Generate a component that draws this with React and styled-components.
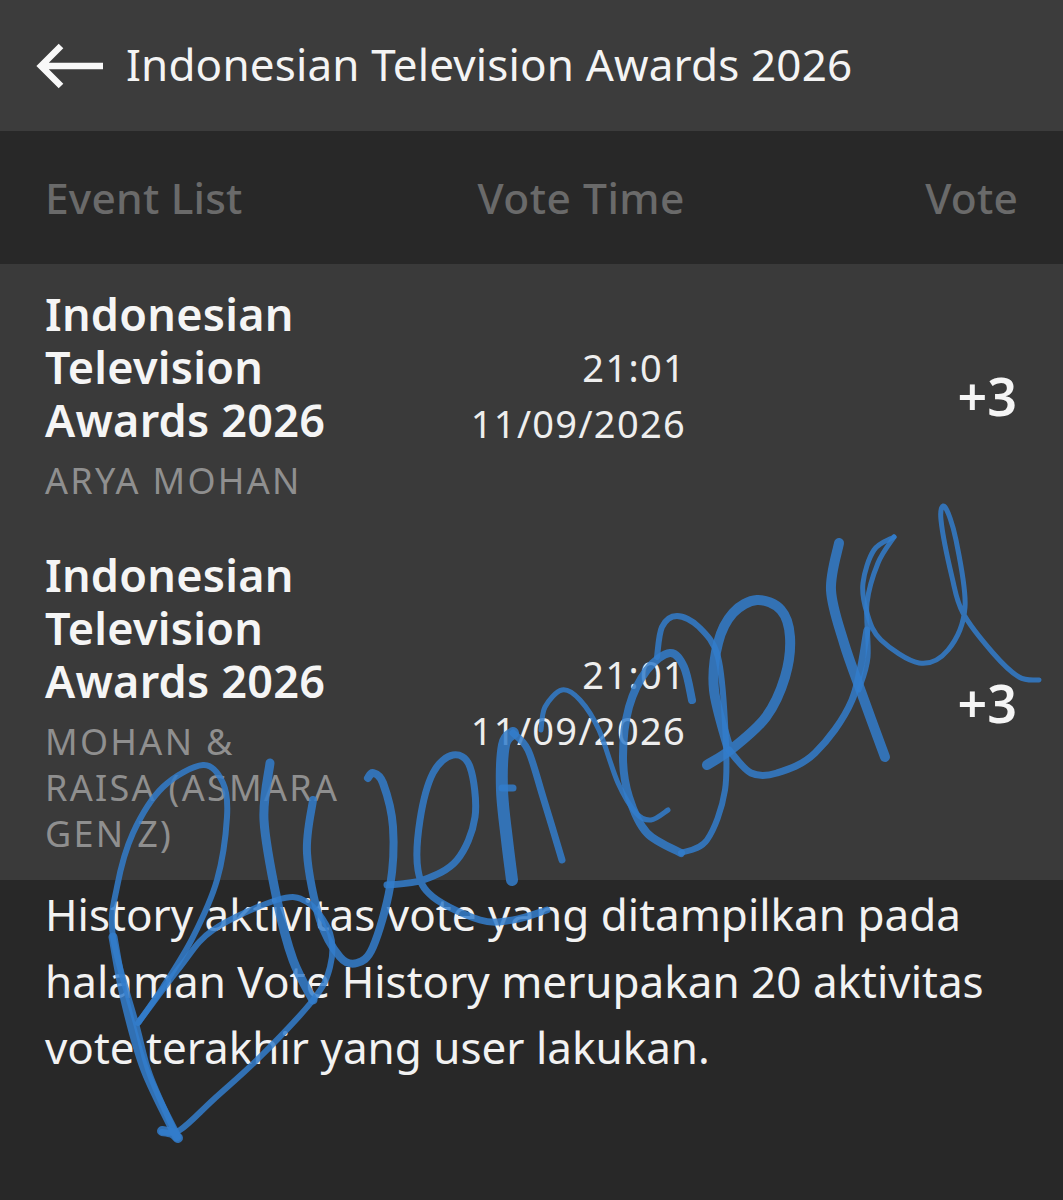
import React from 'react';
import styled, { createGlobalStyle } from 'styled-components';

const GlobalStyle = createGlobalStyle`
  html, body { margin: 0; padding: 0; background: #282828; }
  body { font-family: "Noto Sans", "Open Sans", sans-serif; }
`;

const Page = styled.div`
  position: relative;
  width: 1063px;
  height: 1200px;
  overflow: hidden;
  background: #282828;
`;

const Header = styled.header`
  display: flex;
  align-items: center;
  height: 131px;
  padding-left: 36px;
  box-sizing: border-box;
  background: #3c3c3c;
`;

const BackIcon = styled.svg`
  width: 68px;
  height: 46px;
  flex: none;
`;

const Title = styled.h1`
  margin: -3px 0 0 22px;
  font-size: 44px;
  letter-spacing: 0.15px;
  font-weight: 400;
  color: #f4f4f4;
  white-space: nowrap;
`;

const TableHead = styled.div`
  display: flex;
  align-items: center;
  justify-content: space-between;
  height: 133px;
  padding: 0 45px;
  box-sizing: border-box;
  background: #282828;
`;

const HeadCell = styled.div`
  font-size: 42.5px;
  letter-spacing: ${p => p.$spacing || '0.2px'};
  font-weight: 500;
  color: #6a6a6a;
  width: ${p => p.$width};
  text-align: ${p => p.$align || 'left'};
`;

const Rows = styled.div`
  background: #3a3a3a;
  height: 616px;
`;

const Row = styled.div`
  display: flex;
  align-items: center;
  padding: 23px 46px 21px 45px;
`;

const EventCell = styled.div`
  width: 300px;
  flex: none;
`;

const EventName = styled.div`
  font-size: 45px;
  line-height: 53px;
  font-weight: 600;
  letter-spacing: 0.25px;
  color: #f5f5f5;
`;

const Nominee = styled.div`
  margin-top: 12px;
  font-size: 36px;
  line-height: 46px;
  letter-spacing: 2.3px;
  color: #8f8f8f;
`;

const TimeCell = styled.div`
  width: 341px;
  flex: none;
  margin-top: -2px;
  font-size: 38px;
  line-height: 56px;
  letter-spacing: 1.3px;
  text-align: right;
  color: #eeeeee;
`;

const TimeLine = styled.div``;

const Points = styled.div`
  flex: 1;
  font-size: 52px;
  font-weight: 600;
  text-align: right;
  color: #f5f5f5;
`;

const Note = styled.p`
  margin: 0;
  padding: 1px 60px 0 45px;
  font-size: 44px;
  line-height: 66.5px;
  color: #f2f2f2;
`;

const Signature = styled.svg`
  position: absolute;
  left: 0;
  top: 0;
  width: 1063px;
  height: 1200px;
  pointer-events: none;
`;

// catmull-rom through the traced points
const smooth = pts => {
  let d = `M${pts[0][0]} ${pts[0][1]}`;
  for (let i = 0; i < pts.length - 1; i++) {
    const p0 = pts[i - 1] || pts[i];
    const p1 = pts[i];
    const p2 = pts[i + 1];
    const p3 = pts[i + 2] || p2;
    const c1x = p1[0] + (p2[0] - p0[0]) / 6;
    const c1y = p1[1] + (p2[1] - p0[1]) / 6;
    const c2x = p2[0] - (p3[0] - p1[0]) / 6;
    const c2y = p2[1] - (p3[1] - p1[1]) / 6;
    d += ` C${c1x.toFixed(1)} ${c1y.toFixed(1)} ${c2x.toFixed(1)} ${c2y.toFixed(1)} ${p2[0]} ${p2[1]}`;
  }
  return d;
};

const strokes = [
  // first bowl
  { w: 6, pts: [[177,1137],[150,1075],[137,1027],[113,937],[117,887],[133,833],[163,787],[203,765],[223,783],[227,817],[217,880],[193,937],[163,987],[138,1023]] },
  { w: 9, pts: [[113,937],[125,1000],[145,1070],[177,1137]] },
  // second bowl
  { w: 6, pts: [[138,1023],[180,967],[213,930],[277,900],[307,902],[330,933],[330,967],[313,1000],[260,1057],[213,1100],[180,1130],[162,1132]] },
  { w: 10, pts: [[162,1131],[172,1133],[178,1138]] },
  // l
  { w: 9, pts: [[270,763],[264,820],[277,900],[293,960],[313,1000]] },
  // u
  { w: 8, pts: [[313,800],[307,853],[320,920],[340,957],[357,963],[373,947],[390,887],[393,827],[383,783],[373,773],[368,778]] },
  // e
  { w: 7, pts: [[387,885],[423,880],[457,860],[475,817],[470,767],[453,755],[433,773],[420,820],[418,870],[433,897],[480,920],[513,920],[547,910]] },
  // n
  { w: 12, pts: [[512,880],[507,840],[502,790],[504,745],[513,733]] },
  { w: 7, pts: [[513,733],[528,750],[543,797],[562,860]] },
  { w: 7, pts: [[502,788],[513,788]] },
  { w: 5, pts: [[541,730],[545,707],[562,690],[580,700],[599,730],[618,783],[636,813],[651,820],[668,810]] },
  // c with the loop back over it
  { w: 8, pts: [[692,700],[684,667],[670,653],[647,670],[629,707],[623,757],[629,797],[647,833],[681,853]] },
  { w: 6, pts: [[681,853],[707,840],[725,790],[725,723],[718,657],[699,627],[677,616],[662,627],[657,657]] },
  // e
  { w: 10, pts: [[707,765],[733,748],[766,717],[785,677],[790,637],[781,610],[757,600],[733,613],[718,643],[714,690],[729,750]] },
  { w: 7, pts: [[729,750],[751,773],[777,773],[815,753],[852,700],[867,630]] },
  // k
  { w: 10, pts: [[839,543],[831,590],[844,643],[863,697],[885,757]] },
  { w: 5, pts: [[894,537],[874,550],[863,583],[867,613],[881,640],[919,663],[948,650],[965,607],[956,540],[945,507],[941,520],[952,577],[963,613],[993,653],[1019,677],[1039,680]] },
  { w: 5, pts: [[894,537],[878,563],[867,603],[868,657],[859,690]] },
];

const rows = [
  { nominee: 'ARYA MOHAN' },
  { nominee: 'MOHAN & RAISA (ASMARA GEN Z)' },
];

export default function App() {
  return (
    <Page>
      <GlobalStyle />
      <Header>
        <BackIcon viewBox="0 0 68 46">
          <path d="M67 23H6M25 3L5 23l20 20" fill="none" stroke="#f8f8f8" strokeWidth="6.5" />
        </BackIcon>
        <Title>Indonesian Television Awards 2026</Title>
      </Header>
      <TableHead>
        <HeadCell $width="300px">Event List</HeadCell>
        <HeadCell $width="340px" $align="right" $spacing="0.5px">Vote Time</HeadCell>
        <HeadCell $width="333px" $align="right">Vote</HeadCell>
      </TableHead>
      <Rows>
        {rows.map(row => (
          <Row key={row.nominee}>
            <EventCell>
              <EventName>Indonesian Television Awards 2026</EventName>
              <Nominee>{row.nominee}</Nominee>
            </EventCell>
            <TimeCell>
              <TimeLine>21:01</TimeLine>
              <TimeLine>11/09/2026</TimeLine>
            </TimeCell>
            <Points>+3</Points>
          </Row>
        ))}
      </Rows>
      <Note>History aktivitas vote yang ditampilkan pada halaman Vote History merupakan 20 aktivitas vote terakhir yang user lakukan.</Note>
      <Signature viewBox="0 0 1063 1200">
        {strokes.map((s, i) => (
          <path
            key={i}
            d={smooth(s.pts)}
            fill="none"
            stroke="rgb(50,124,203)"
            strokeOpacity="0.85"
            strokeWidth={s.w}
            strokeLinecap="round"
            strokeLinejoin="round"
          />
        ))}
      </Signature>
    </Page>
  );
}
